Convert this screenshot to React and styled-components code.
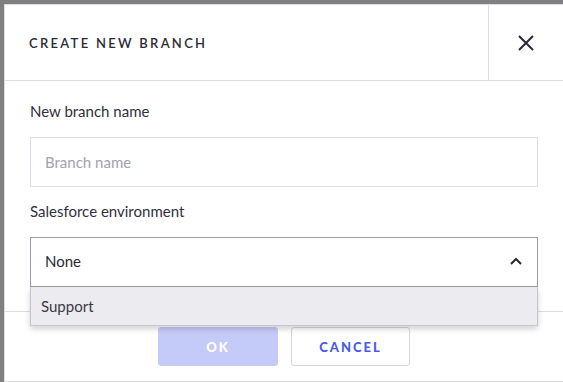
import React from "react";
import styled, { createGlobalStyle } from "styled-components";

const GlobalStyle = createGlobalStyle`
  html, body {
    margin: 0;
    padding: 0;
    background: #808080;
    font-family: "Lato", "Liberation Sans", sans-serif;
    overflow: hidden;
  }
`;

const Backdrop = styled.div`
  width: 563px;
  height: 382px;
  padding: 4px 0 0 4px;
  box-sizing: border-box;
  overflow: hidden;
`;

const Modal = styled.div`
  width: 560px;
  height: 378px;
  box-sizing: border-box;
  background: #fff;
  border: 1px solid #dcdce6;
  display: flex;
  flex-direction: column;
`;

const Header = styled.div`
  display: flex;
  height: 75px;
  border-bottom: 1px solid #dcdce6;
  flex-shrink: 0;
`;

const Title = styled.h2`
  flex: 1;
  margin: 0;
  padding-left: 24px;
  display: flex;
  align-items: center;
  font-size: 13px;
  font-weight: 600;
  letter-spacing: 2.3px;
  color: #2a2a38;
`;

const CloseButton = styled.button`
  width: 75px;
  border: none;
  border-left: 1px solid #dcdce6;
  background: transparent;
  display: flex;
  align-items: center;
  justify-content: center;
  padding: 0;
  cursor: pointer;
`;

const Body = styled.div`
  padding: 20px 25px 24px;
  display: flex;
  flex-direction: column;
  border-bottom: 1px solid #dcdce6;
`;

const Label = styled.label`
  font-size: 15px;
  line-height: 20px;
  color: #30303c;
  margin-bottom: 16px;
`;

const TextInput = styled.input`
  height: 50px;
  box-sizing: border-box;
  border: 1px solid #dcdce8;
  padding: 0 14px;
  font-family: inherit;
  font-size: 15px;
  color: #30303c;
  outline: none;
  margin-bottom: 14px;
  &::placeholder {
    color: #a2a2ac;
  }
`;

const SelectWrap = styled.div`
  position: relative;
`;

const SelectBox = styled.div`
  height: 50px;
  box-sizing: border-box;
  border: 1px solid #9c9ca8;
  padding: 0 14px 2px;
  display: flex;
  align-items: center;
  justify-content: space-between;
  font-size: 15px;
  color: #2a2a36;
`;

const Menu = styled.ul`
  position: absolute;
  top: 50px;
  left: 0;
  right: 0;
  margin: 0;
  padding: 0;
  list-style: none;
  background: #ebebf0;
  border: 1px solid #c6c6ce;
  border-top: none;
  box-shadow: 0 3px 6px rgba(0, 0, 0, 0.18);
  z-index: 2;
`;

const MenuItem = styled.li`
  height: 38px;
  display: flex;
  align-items: center;
  padding: 0 10px;
  font-size: 15px;
  color: #3a3a44;
`;

const Footer = styled.div`
  display: flex;
  justify-content: center;
  gap: 13px;
  padding: 15px 0;
`;

const Button = styled.button`
  width: ${p => (p.$primary ? "120px" : "119px")};
  height: 39px;
  box-sizing: border-box;
  border-radius: 3px;
  border: 1px solid ${p => (p.$primary ? "#c5cbf8" : "#d6d6de")};
  background: ${p => (p.$primary ? "#c5cbf8" : "#fff")};
  color: ${p => (p.$primary ? "#fff" : "#4a5af0")};
  font-family: inherit;
  font-size: 13px;
  font-weight: 900;
  letter-spacing: 2px;
  cursor: pointer;
`;

const App = () => (
  <>
    <GlobalStyle />
    <Backdrop>
      <Modal>
        <Header>
          <Title>CREATE NEW BRANCH</Title>
          <CloseButton aria-label="Close">
            <svg width="18" height="18" viewBox="0 0 18 18">
              <path d="M2 2 L16 16 M16 2 L2 16" stroke="#2a2a38" strokeWidth="2" fill="none" />
            </svg>
          </CloseButton>
        </Header>
        <Body>
          <Label htmlFor="branchName">New branch name</Label>
          <TextInput id="branchName" placeholder="Branch name" />
          <Label>Salesforce environment</Label>
          <SelectWrap>
            <SelectBox>
              <span>None</span>
              <svg width="14" height="10" viewBox="0 0 14 10">
                <path d="M2 8 L7 3 L12 8" stroke="#2a2a36" strokeWidth="2" fill="none" />
              </svg>
            </SelectBox>
            <Menu>
              <MenuItem>Support</MenuItem>
            </Menu>
          </SelectWrap>
        </Body>
        <Footer>
          <Button $primary>OK</Button>
          <Button>CANCEL</Button>
        </Footer>
      </Modal>
    </Backdrop>
  </>
);

export default App;
